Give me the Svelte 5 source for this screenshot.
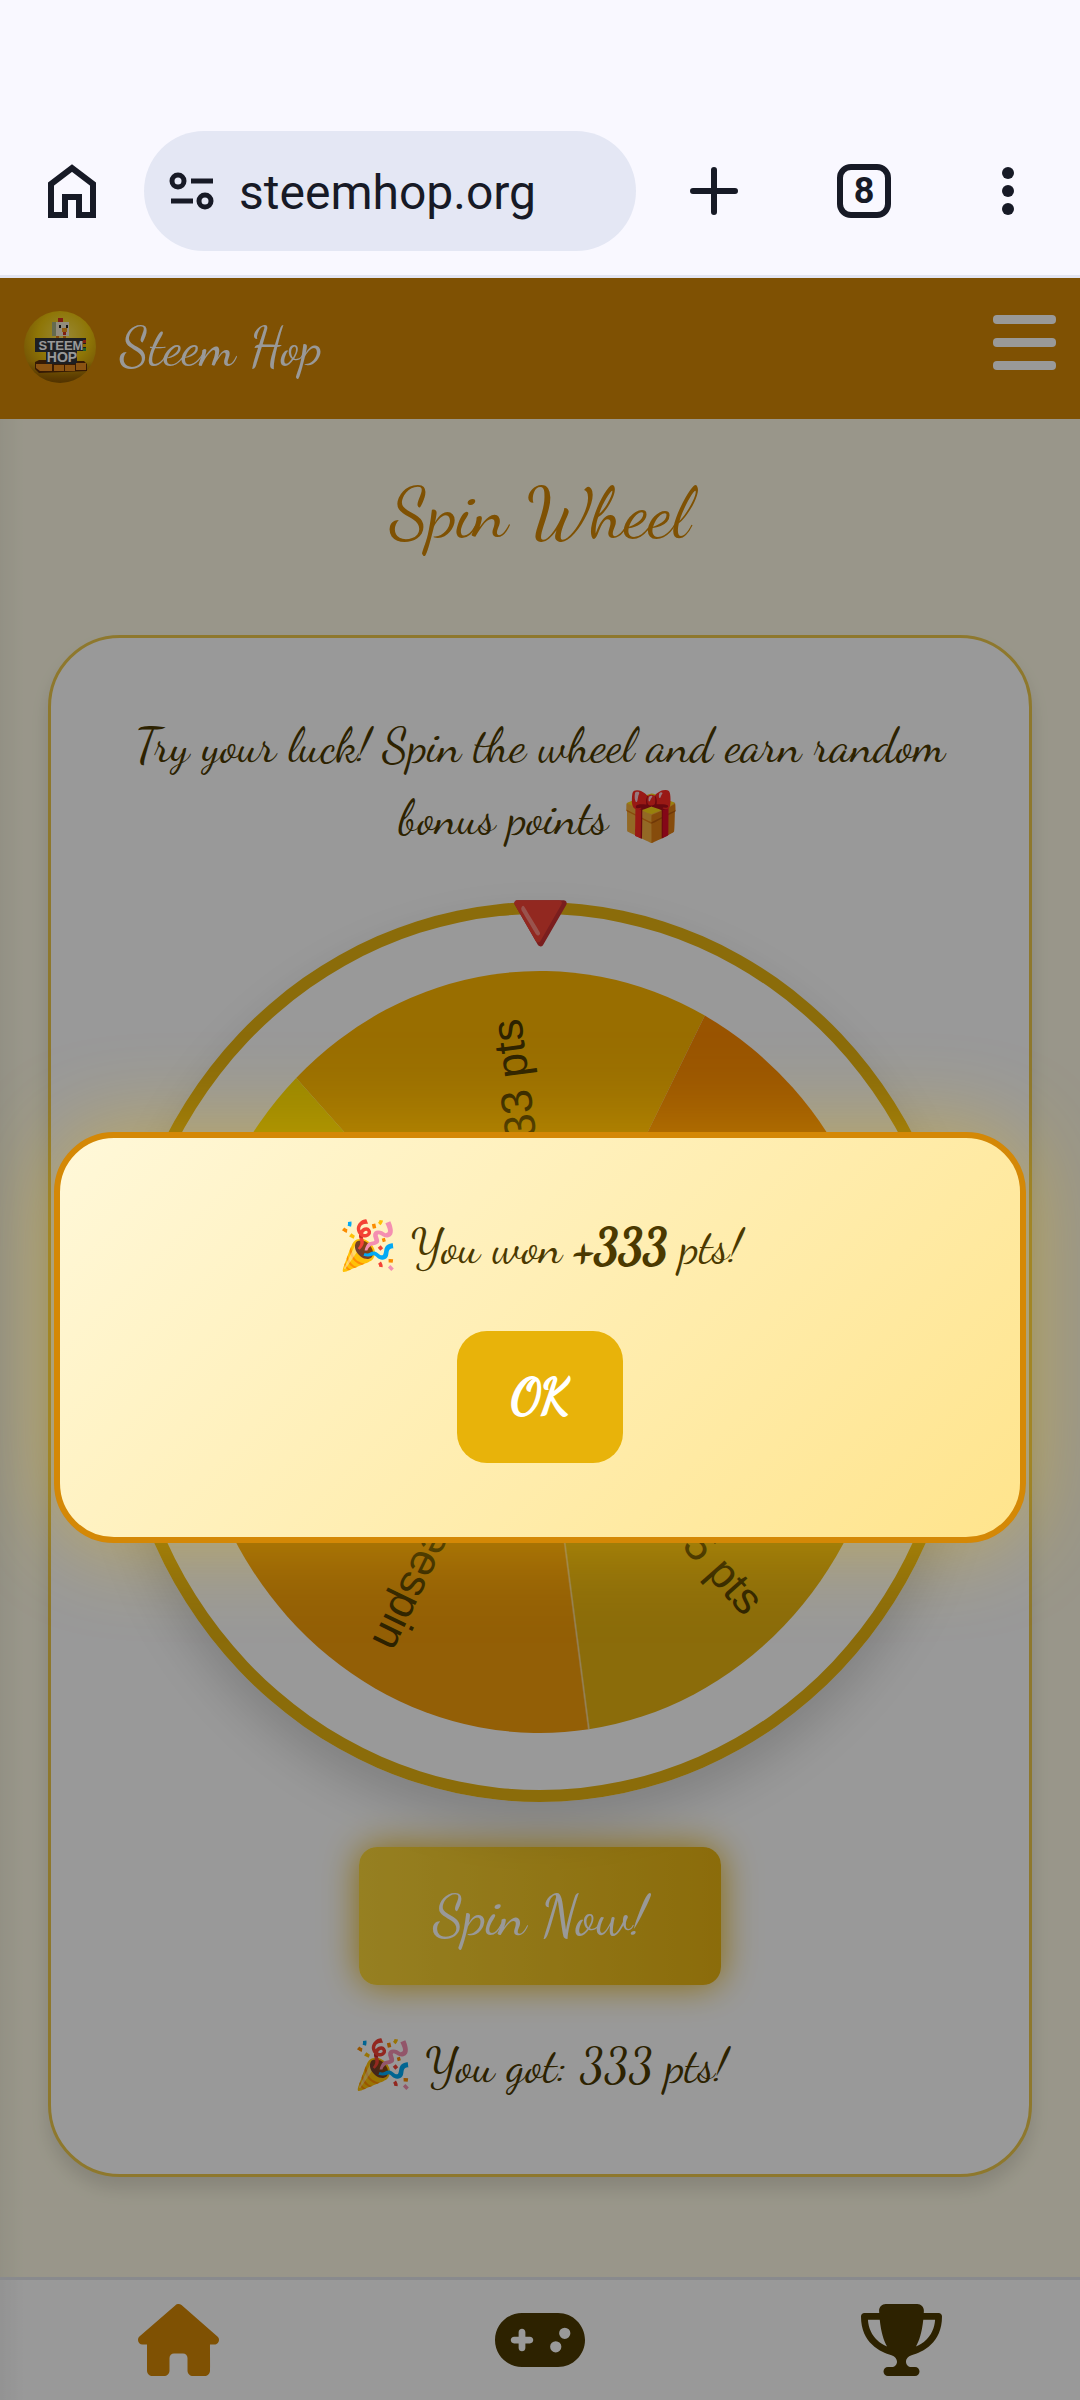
<script>
  const slices = [
    { start: -44, label: '333 pts', color: '#ffb700' },
    { start: 28, label: '200 pts', color: '#ff8c00' },
    { start: 100, label: '555 pts', color: '#e8b412' },
    { start: 172, label: 'Freespin', color: '#f59e0b' },
    { start: 244, label: '100 pts', color: '#ffe000' }
  ];

  // the wheel face is slightly taller than it is wide
  const rx = 351;
  const ry = 381;

  const point = (deg) => {
    const a = (deg * Math.PI) / 180;
    return [rx * Math.sin(a), -ry * Math.cos(a)];
  };

  const slicePath = (start) => `M0 0L${point(start)}A${rx} ${ry} 0 0 1 ${point(start + 72)}Z`;

  // labels run outwards along the middle of their slice
  const labelAngle = (start) => {
    const [x, y] = point(start + 36);
    return (Math.atan2(y, x) * 180) / Math.PI;
  };

  let open = $state(true);
</script>

<div class="browser">
  <button class="icon" aria-label="Home">
    <svg width="48" height="54" viewBox="0 0 48 54"><path d="M3 51V20L24 4l21 16v31H31V33H17v18z" fill="none" stroke="#171a26" stroke-width="6" /></svg>
  </button>
  <label class="address">
    <svg width="46" height="40" viewBox="0 0 46 40" fill="none" stroke="#171a26" stroke-width="5"><circle cx="9" cy="10" r="6" /><path d="M22 10h22M2 30h22" /><circle cx="36" cy="30" r="6" /></svg>
    <input type="text" value="steemhop.org" aria-label="Address" />
  </label>
  <div class="tools">
    <button class="icon" aria-label="New tab">
      <svg width="48" height="48" viewBox="0 0 48 48"><path d="M24 3v42M3 24h42" stroke="#171a26" stroke-width="6" stroke-linecap="round" /></svg>
    </button>
    <button class="icon tabs" aria-label="Tabs">8</button>
    <button class="icon" aria-label="Menu">
      <svg width="48" height="48" viewBox="0 0 48 48" fill="#171a26"><circle cx="24" cy="6" r="6" /><circle cx="24" cy="24" r="6" /><circle cx="24" cy="42" r="6" /></svg>
    </button>
  </div>
</div>

<div class="site">
  <header>
    <a class="brand" href="/">
      <svg class="logo" width="72" height="72" viewBox="0 0 72 72">
        <defs>
          <radialGradient id="ball" cx="0.55" cy="0.35" r="0.65">
            <stop offset="0" stop-color="#ffe45c" />
            <stop offset="0.55" stop-color="#eec50c" />
            <stop offset="1" stop-color="#c08a08" />
          </radialGradient>
          <linearGradient id="ground" x1="0" y1="0" x2="0" y2="1">
            <stop offset="0.7" stop-color="#8a5500" stop-opacity="0" />
            <stop offset="1" stop-color="#8a5500" />
          </linearGradient>
        </defs>
        <circle cx="36" cy="36" r="36" fill="url(#ball)" />
        <circle cx="36" cy="36" r="36" fill="url(#ground)" />
        <path d="M34 7h5v4h-5z" fill="#d8321e" />
        <path d="M28 11h17v14H28z" fill="#f3ead0" />
        <path d="M28 11h4v14h-4z" fill="#a9b183" />
        <path d="M35 14h2v3h-2zM42 14h2v3h-2z" fill="#222" />
        <path d="M38 17h5v4h-5z" fill="#f39a1d" />
        <path d="M39 21h3v3h-3z" fill="#d8321e" />
        <path d="M32 25h3v3h-3zM39 25h3v3h-3z" fill="#e07b10" />
        <path d="M11 27h51v13H53v13H22V41H11z" fill="#32343a" />
        <path d="M59 29h3v3h-3z" fill="#d8321e" />
        <path d="M59 33h3v3h-3z" fill="#f0b400" />
        <path d="M59 37h3v3h-3z" fill="#3aa040" />
        <path d="M11 51l4-2h7v4h31v-3h7l3 3v7l-48 2-4-4z" fill="#5a2c08" />
        <path d="M12 53h16v7H16l-4-3zM30 54h10v6H30zM41 54h10v6H41zM52 52h10v7H52z" fill="#e88a1e" />
        <text x="37" y="39" font-size="13">STEEM</text>
        <text x="38" y="51" font-size="14">HOP</text>
      </svg>
      Steem Hop
    </a>
    <button class="burger" aria-label="Open menu"><i></i><i></i><i></i></button>
  </header>

  <main>
    <h1>Spin Wheel</h1>
    <section class="card">
      <p>Try your luck! Spin the wheel and earn random bonus points 🎁</p>
      <div class="wheel">
        <svg viewBox="-414 -438 828 876">
          {#each slices as slice}
            <path d={slicePath(slice.start)} fill={slice.color} />
          {/each}
          <path d="M0 0L{point(172)}" stroke="#fff" stroke-opacity="0.4" stroke-width="2" />
          {#each slices as slice}
            <text x="334" y="24" text-anchor="end" transform="rotate({labelAngle(slice.start)})">{slice.label}</text>
          {/each}
        </svg>
        <span class="pointer">🔻</span>
      </div>
      <button class="spin">Spin Now!</button>
      <p class="result">🎉 You got: 333 pts!</p>
    </section>
  </main>

  <nav>
    <a href="/" class="active" aria-label="Home">
      <svg width="81" height="72" viewBox="0 0 576 512"><path d="M575.8 255.5c0 18-15 32.1-32 32.1h-32l.7 160.2c0 2.7-.2 5.4-.5 8.1V472c0 22.1-17.9 40-40 40H392c-22.1 0-40-17.9-40-40v-88c0-17.7-14.3-32-32-32h-64c-17.7 0-32 14.3-32 32v88c0 22.1-17.9 40-40 40h-80c-22.1 0-40-17.9-40-40V287.6H32c-18 0-32-14-32-32.1 0-9 3-17 10-24L266.4 8c7-7 15-8 22-8s15 2 21 7l255.4 224.5c8 7 12 15 11 24z" /></svg>
    </a>
    <a href="/games" aria-label="Games">
      <svg width="90" height="72" viewBox="0 0 640 512"><path d="M192 64C86 64 0 150 0 256s86 192 192 192h256c106 0 192-86 192-192S554 64 448 64H192zm304 104a40 40 0 1 1 0 80 40 40 0 1 1 0-80zM392 304a40 40 0 1 1 80 0 40 40 0 1 1-80 0zM168 200c0-13.3 10.7-24 24-24s24 10.7 24 24v32h32c13.3 0 24 10.7 24 24s-10.7 24-24 24h-32v32c0 13.3-10.7 24-24 24s-24-10.7-24-24v-32h-32c-13.3 0-24-10.7-24-24s10.7-24 24-24h32v-32z" /></svg>
    </a>
    <a href="/leaderboard" aria-label="Leaderboard">
      <svg width="81" height="72" viewBox="0 0 576 512"><path d="M400 0H176c-26.5 0-48.1 21.8-47.1 48.2.2 5.3.4 10.6.7 15.8H24C10.7 64 0 74.7 0 88c0 92.6 33.5 157 78.5 200.7 44.3 43.1 98.3 64.8 138.1 75.8 23.4 6.5 39.4 26 39.4 45.6 0 20.9-17 37.9-37.9 37.9H192c-17.7 0-32 14.3-32 32s14.3 32 32 32h192c17.7 0 32-14.3 32-32s-14.3-32-32-32h-26.1C337 448 320 431 320 410.1c0-19.6 15.9-39.2 39.4-45.6 39.9-11 93.9-32.7 138.2-75.8C542.5 245 576 180.6 576 88c0-13.3-10.7-24-24-24H446.4c.3-5.2.5-10.4.7-15.8C448.1 21.8 426.5 0 400 0zM48.9 112h84.4c9.1 90.1 29.2 150.3 51.9 190.6-24.9-11-50.8-26.5-73.2-48.3-32-31.1-58-76-63-142.3zm415.2 142.3c-22.4 21.8-48.3 37.3-73.2 48.3 22.7-40.3 42.8-100.5 51.9-190.6h84.4c-5.1 66.3-31.1 111.2-63.1 142.3z" /></svg>
    </a>
  </nav>

  {#if open}
    <div class="overlay">
      <div class="dialog" role="dialog" aria-label="Spin result">
        <p>🎉 You won <b>+333</b> pts!</p>
        <button onclick={() => (open = false)}>OK</button>
      </div>
    </div>
  {/if}
</div>

<style>
  :global(body) {
    margin: 0;
    background: #f9f8ff;
  }

  button {
    border: 0;
    padding: 0;
    background: none;
    font: inherit;
    color: inherit;
  }

  svg {
    display: block;
  }

  .browser {
    display: flex;
    align-items: center;
    gap: 48px;
    padding: 131px 48px 24px;
    border-bottom: 3px solid #e3e5f2;
  }

  .icon {
    display: flex;
    align-items: center;
    justify-content: center;
  }

  .address {
    flex: 1;
    display: flex;
    align-items: center;
    gap: 24px;
    box-sizing: border-box;
    min-width: 0;
    height: 120px;
    padding: 0 25px;
    border-radius: 60px;
    background: #e4e7f4;
  }

  .address svg {
    flex-shrink: 0;
  }

  .address input {
    flex: 1;
    min-width: 0;
    border: 0;
    padding: 2px 0 0;
    background: none;
    font: 48px Roboto, sans-serif;
    color: #171a26;
  }

  .tools {
    flex-shrink: 0;
    display: flex;
    align-items: center;
    gap: 93px;
    padding-left: 6px;
  }

  .tabs {
    box-sizing: border-box;
    width: 54px;
    height: 54px;
    margin-left: 6px;
    border: 6px solid #171a26;
    border-radius: 14px;
    font: bold 36px Roboto, sans-serif;
    color: #171a26;
  }

  .site {
    position: relative;
    background: #fffbe6;
    font-family: 'Dancing Script', cursive;
    font-size: 48px;
    line-height: 72px;
    color: #4b3900;
  }

  header {
    display: flex;
    align-items: center;
    justify-content: space-between;
    height: 138px;
    padding: 0 24px 3px;
    background: #d48806;
    color: #fff;
  }

  .brand {
    display: flex;
    align-items: center;
    gap: 24px;
    color: #fff;
    font-size: 54px;
    text-decoration: none;
  }

  .logo text {
    font-family: 'Liberation Sans', sans-serif;
    font-weight: bold;
    text-anchor: middle;
    fill: #fff;
  }

  .burger {
    display: flex;
    flex-direction: column;
    gap: 14px;
    padding-bottom: 9px;
  }

  .burger i {
    width: 63px;
    height: 9px;
    border-radius: 4px;
    background: #fff;
  }

  main {
    padding: 46px 48px 100px;
    background: linear-gradient(90deg, rgba(0, 0, 0, 0.04), transparent 24px);
  }

  h1 {
    margin: 0 0 74px;
    font-size: 72px;
    font-weight: normal;
    line-height: 96px;
    text-align: center;
    color: #d48806;
  }

  .card {
    display: flex;
    flex-direction: column;
    align-items: center;
    padding: 72px 63px;
    border: 3px solid #edc94c;
    border-radius: 72px;
    background: #fff;
    box-shadow: 0 12px 18px rgba(0, 0, 0, 0.12);
    text-align: center;
  }

  p {
    margin: 0;
  }

  .wheel {
    position: relative;
    box-sizing: border-box;
    width: 100%;
    margin: 48px 0 45px;
    border: 12px solid #e8b412;
    border-radius: 50%;
    box-shadow: 0 24px 48px rgba(0, 0, 0, 0.16);
  }

  .wheel svg {
    width: 100%;
  }

  .wheel text {
    font: 44px 'Liberation Sans', sans-serif;
    fill: #4b3900;
  }

  .pointer {
    position: absolute;
    top: -34px;
    left: 50%;
    transform: translateX(-50%);
    font-size: 90px;
    line-height: 90px;
  }

  .spin {
    padding: 33px 74px;
    border-radius: 18px;
    background: linear-gradient(90deg, #fad538, #e8b412);
    box-shadow: 0 0 36px #e8b412;
    font-size: 57px;
    color: #fff;
  }

  .result {
    margin-top: 45px;
  }

  nav {
    display: flex;
    align-items: center;
    justify-content: space-around;
    height: 120px;
    border-top: 3px solid #e5e7eb;
    background: linear-gradient(90deg, rgba(0, 0, 0, 0.04), transparent 24px), #fff;
  }

  nav a {
    fill: #4b3900;
  }

  nav .active {
    fill: #d48806;
  }

  .overlay {
    position: absolute;
    inset: 0;
    display: flex;
    align-items: center;
    justify-content: center;
    padding-bottom: 3px;
    background: rgba(0, 0, 0, 0.4);
  }

  .dialog {
    box-sizing: border-box;
    width: 90%;
    padding: 73px 48px 74px;
    border: 6px solid #d48806;
    border-radius: 60px;
    background: linear-gradient(135deg, #fff8d9, #ffe48c);
    box-shadow: 0 0 90px rgba(255, 200, 0, 0.4);
    text-align: center;
  }

  .dialog b {
    font-weight: normal;
    -webkit-text-stroke: 2px;
  }

  .dialog button {
    margin-top: 48px;
    padding: 30px 54px;
    border-radius: 30px;
    background: #e8b30a;
    -webkit-text-stroke: 2px;
    color: #fff;
  }
</style>
